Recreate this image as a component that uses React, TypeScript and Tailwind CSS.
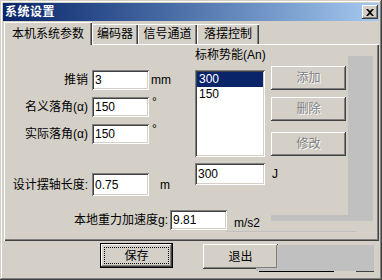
import React from "react";

const FONT = "font-['Liberation_Sans','Noto_Sans_CJK_SC',sans-serif]";
const SUNKEN =
  "bg-white shadow-[inset_1px_1px_#808080,inset_-1px_-1px_#ffffff,inset_2px_2px_#404040,inset_-2px_-2px_#d4d0c8]";
const RAISED =
  "bg-[#d4d0c8] shadow-[inset_-1px_-1px_#404040,inset_1px_1px_#ffffff,inset_-2px_-2px_#808080,inset_2px_2px_#d4d0c8]";

function Input({ value, w, h }: { value: string; w: string; h: string }) {
  return (
    <div className={`${SUNKEN} ${w} ${h} flex items-center pl-[3px] text-[12px] leading-[14px] text-black`}>
      {value}
    </div>
  );
}

function DisabledButton({ label, mt }: { label: string; mt: string }) {
  return (
    <div
      className={`${RAISED} ${mt} w-[75px] h-[24px] flex items-center justify-center text-[12px] leading-[14px] text-[#808080] [text-shadow:1px_1px_#ffffff]`}
    >
      {label}
    </div>
  );
}

export default function App() {
  return (
    <div
      className={`${FONT} relative w-[382px] h-[280px] bg-[#d4d0c8] p-[3px] text-black shadow-[inset_-1px_-1px_#404040,inset_1px_1px_#d4d0c8,inset_-2px_-2px_#808080,inset_2px_2px_#ffffff]`}
    >
      {/* title bar */}
      <div className="h-[18px] flex items-center justify-between bg-linear-to-r from-[#0a246a] to-[#a6caf0] pl-[2px] pr-[1px]">
        <span className="text-white font-bold text-[12px] leading-[14px] tracking-[0.5px]">系统设置</span>
        <div className={`${RAISED} w-[16px] h-[14px] flex items-center justify-center`}>
          <svg width="8" height="7" viewBox="0 0 8 7">
            <path d="M0 0h2l2 2 2-2h2L5 3.5 8 7H6L4 5 2 7H0l3-3.5z" fill="#000" />
          </svg>
        </div>
      </div>

      {/* tabs */}
      <div className="mt-[1px] flex h-[22px] items-start pl-[1px] text-[12px] leading-[14px]">
        <div className="relative z-10 w-[88px] h-[23px] bg-[#d4d0c8] flex items-center justify-center shadow-[inset_1px_1px_#ffffff,inset_-1px_0_#404040,inset_-2px_0_#808080]">
          本机系统参数
        </div>
        <div className="mt-[2px] w-[46px] h-[20px] flex items-center justify-center shadow-[inset_1px_1px_#ffffff,inset_-1px_0_#404040,inset_-2px_0_#808080]">
          编码器
        </div>
        <div className="mt-[2px] w-[59px] h-[20px] flex items-center justify-center shadow-[inset_1px_1px_#ffffff,inset_-1px_0_#404040,inset_-2px_0_#808080]">
          信号通道
        </div>
        <div className="mt-[2px] w-[62px] h-[20px] flex items-center justify-center shadow-[inset_1px_1px_#ffffff,inset_-1px_0_#404040,inset_-2px_0_#808080]">
          落摆控制
        </div>
      </div>

      {/* panel */}
      <div className="relative ml-[1px] w-[375px] h-[197px] text-[12px] leading-[14px] shadow-[inset_1px_1px_#ffffff,inset_-1px_-1px_#404040,inset_-2px_-2px_#808080]">
        <div className="flex">
          {/* left column */}
          <div className="w-[191px] flex flex-col">
            <div className="mt-[26px] flex items-center">
              <span className="w-[84px] text-right">推销</span>
              <div className="ml-[4px]">
                <Input value="3" w="w-[57px]" h="h-[20px]" />
              </div>
              <span className="ml-[2px]">mm</span>
            </div>
            <div className="mt-[7px] flex items-center">
              <span className="w-[84px] text-right">名义落角(α)</span>
              <div className="ml-[4px]">
                <Input value="150" w="w-[57px]" h="h-[20px]" />
              </div>
              <span className="ml-[3px] self-start -mt-[2px]">°</span>
            </div>
            <div className="mt-[7px] flex items-center">
              <span className="w-[84px] text-right">实际落角(α)</span>
              <div className="ml-[4px]">
                <Input value="150" w="w-[57px]" h="h-[20px]" />
              </div>
              <span className="ml-[3px] self-start -mt-[2px]">°</span>
            </div>
            <div className="mt-[29px] flex items-center">
              <span className="w-[84px] text-right">设计摆轴长度:</span>
              <div className="ml-[4px]">
                <Input value="0.75" w="w-[57px]" h="h-[23px]" />
              </div>
              <span className="ml-[11px]">m</span>
            </div>
          </div>

          {/* right section */}
          <div className="flex flex-col">
            <div className="mt-[3px] leading-[16px]">标称势能(An)</div>
            <div className="mt-[3px] flex items-start">
              <div className={`${SUNKEN} mt-[4px] w-[70px] h-[87px] p-[2px]`}>
                <div className="h-[15px] bg-[#0a246a] text-white pl-[2px] leading-[15px]">300</div>
                <div className="h-[15px] pl-[2px] leading-[15px]">150</div>
              </div>
              <div className="ml-[6px] flex flex-col">
                <DisabledButton label="添加" mt="mt-0" />
                <DisabledButton label="删除" mt="mt-[7px]" />
                <DisabledButton label="修改" mt="mt-[11px]" />
              </div>
            </div>
            <div className="mt-[6px] flex items-center">
              <Input value="300" w="w-[70px]" h="h-[22px]" />
              <span className="ml-[7px]">J</span>
            </div>
          </div>
        </div>

        <div className="mt-[14px] flex items-center">
          <span className="w-[164px] text-right">本地重力加速度g:</span>
          <div className="ml-[2px]">
            <Input value="9.81" w="w-[57px]" h="h-[20px]" />
          </div>
          <span className="ml-[7px] mt-[6px]">m/s2</span>
        </div>

        {/* rendering artefacts */}
        <div className="absolute left-[344px] top-[12px] w-[25px] h-[165px] bg-[#c0c0c0]" />
        <div className="absolute left-[267px] top-[171px] w-[102px] h-[6px] bg-[#c0c0c0]" />
        <div className="absolute left-[222px] top-[187px] w-[130px] h-[1px] bg-[#c0c0c0]" />
      </div>

      {/* bottom buttons */}
      <div className="flex items-start pl-[97px] text-[12px] leading-[14px]">
        <div className="mt-[2px] w-[73px] h-[25px] p-[4px] bg-[#d4d0c8] shadow-[inset_0_0_0_1px_#000000,inset_-2px_-2px_#404040,inset_2px_2px_#ffffff,inset_-3px_-3px_#808080]">
          <div className="w-full h-full border border-dotted border-black flex items-center justify-center">
            保存
          </div>
        </div>
        <div className={`${RAISED} ml-[30px] mt-[3px] w-[75px] h-[25px] flex items-center justify-center`}>
          退出
        </div>
      </div>

      <div className="absolute left-[277px] top-[245px] w-[97px] h-[26px] bg-[#c0c0c0]" />
      <div className="absolute left-[256px] top-[268px] w-[21px] h-[3px] bg-[#c0c0c0]" />
      <div className="absolute left-[259px] top-[271px] w-[75px] h-[1px] bg-black" />
      <div className="absolute left-[356px] top-[271px] w-[18px] h-[1px] bg-[#404040]" />
    </div>
  );
}
